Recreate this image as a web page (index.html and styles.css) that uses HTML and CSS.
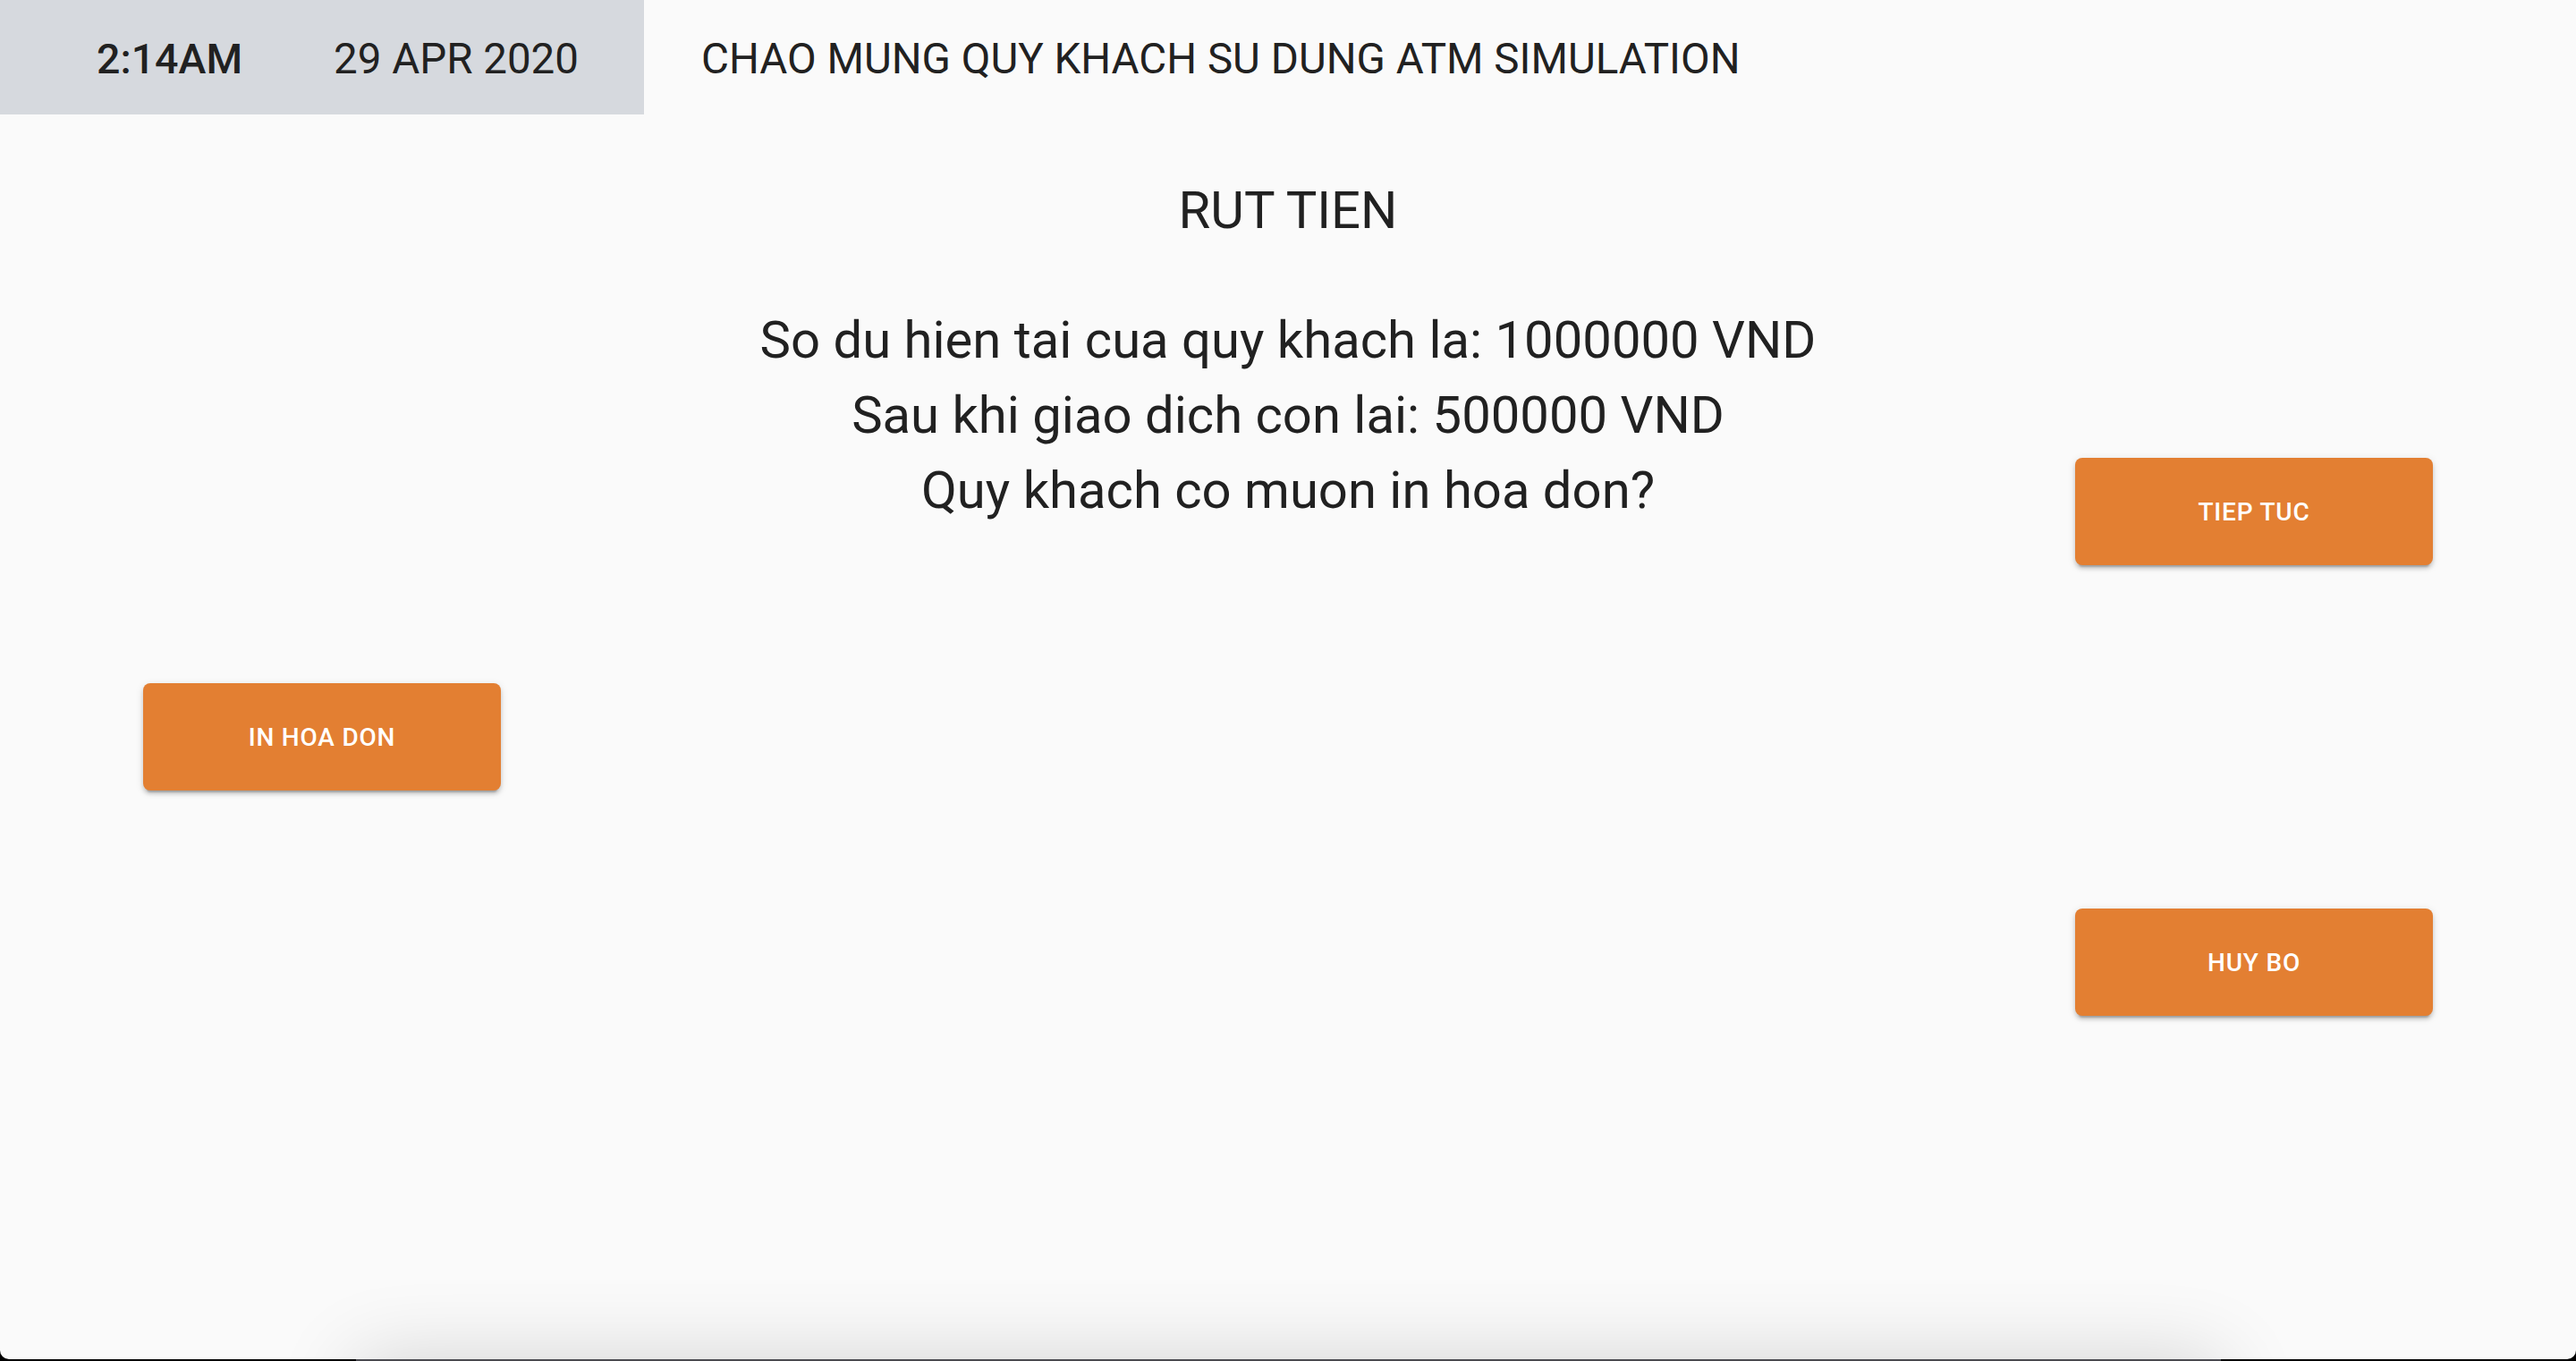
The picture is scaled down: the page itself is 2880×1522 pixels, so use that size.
FILE: index.html
```html
<!DOCTYPE html>
<html lang="vi">
<head>
<meta charset="utf-8">
<title>ATM Simulation</title>
<link rel="stylesheet" href="styles.css">
</head>
<body>
<div class="screen">
  <header class="topbar">
    <div class="clock">
      <span class="time">2:14AM</span>
      <span class="date">29 APR 2020</span>
    </div>
    <div class="welcome">CHAO MUNG QUY KHACH SU DUNG ATM SIMULATION</div>
  </header>
  <main class="main">
    <section class="content">
      <h1 class="title">RUT TIEN</h1>
      <p class="message">So du hien tai cua quy khach la: 1000000 VND<br>Sau khi giao dich con lai: 500000 VND<br>Quy khach co muon in hoa don?</p>
    </section>
    <button class="btn btn-continue">TIEP TUC</button>
    <button class="btn btn-print">IN HOA DON</button>
    <button class="btn btn-cancel">HUY BO</button>
  </main>
</div>
<div class="dock"></div>
</body>
</html>
```
FILE: styles.css
```css
html, body {
  margin: 0;
  padding: 0;
  background: #000;
  overflow: hidden;
}
body {
  font-family: Roboto, "Liberation Sans", sans-serif;
  color: #212121;
}
.screen {
  height: 1520px;
  background: #fafafa;
  border-radius: 0 0 10px 10px;
  overflow: hidden;
}
.topbar {
  display: flex;
  align-items: center;
  height: 128px;
}
.clock {
  display: flex;
  align-items: center;
  gap: 102px;
  width: 720px;
  height: 128px;
  box-sizing: border-box;
  padding: 4px 0 0 108px;
  background: #d6d9de;
  font-size: 47.5px;
}
.time {
  font-size: 46.5px;
  font-weight: 500;
}
.welcome {
  margin-left: 64px;
  padding-top: 4px;
  font-size: 47.5px;
}
.main {
  display: grid;
  grid-template-columns: 400px 1fr 400px;
  grid-template-rows: 252px 120px 120px 120px;
  row-gap: 132px;
  padding: 0 160px;
}
.content {
  grid-column: 2;
  grid-row: 1 / span 2;
  text-align: center;
}
.title {
  margin: 73px 0 0;
  font-size: 58px;
  font-weight: 400;
  line-height: normal;
}
.message {
  margin: 69px 0 0;
  font-size: 58px;
  line-height: 84px;
}
.btn {
  width: 400px;
  height: 120px;
  border: none;
  border-radius: 8px;
  background: #e37f32;
  color: #fff;
  font-family: Roboto, "Liberation Sans", sans-serif;
  font-size: 28px;
  font-weight: 500;
  letter-spacing: 0.8px;
  box-shadow: 0 6px 2px -4px rgba(0,0,0,0.2), 0 4px 4px 0 rgba(0,0,0,0.14), 0 2px 10px 0 rgba(0,0,0,0.12);
  cursor: pointer;
}
.btn-continue {
  grid-column: 3;
  grid-row: 2;
}
.btn-print {
  grid-column: 1;
  grid-row: 3;
}
.btn-cancel {
  grid-column: 3;
  grid-row: 4;
}
.dock {
  position: fixed;
  left: 398px;
  width: 2085px;
  bottom: -198px;
  height: 200px;
  background: #4a4a50;
  box-shadow: 0 0 90px rgba(0,0,0,0.16);
}
```
